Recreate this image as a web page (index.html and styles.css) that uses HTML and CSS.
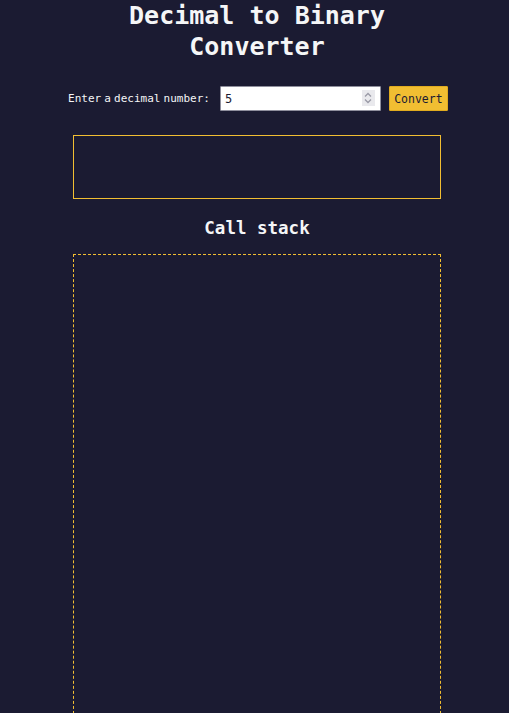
FILE: index.html
```html
<!DOCTYPE html>
<html lang="en">
<head>
<meta charset="UTF-8">
<title>Decimal to Binary Converter</title>
<link rel="stylesheet" href="styles.css">
</head>
<body>
  <main class="page">
    <h1 class="title">Decimal to Binary<br>Converter</h1>
    <div class="input-row">
      <label class="label" for="number-input">Enter a decimal number:</label>
      <span class="field">
        <input class="number-input" id="number-input" type="number" value="5">
        <span class="spinner" aria-hidden="true">
          <svg width="10" height="14" viewBox="0 0 10 14">
            <path d="M2 5.5 L5 2.5 L8 5.5" fill="none" stroke="#9a9aa6" stroke-width="1.3"/>
            <path d="M2 8.5 L5 11.5 L8 8.5" fill="none" stroke="#9a9aa6" stroke-width="1.3"/>
          </svg>
        </span>
      </span>
      <button class="convert-btn" type="button">Convert</button>
    </div>
    <div class="result"></div>
    <h2 class="stack-title">Call stack</h2>
    <div class="stack"></div>
  </main>
</body>
</html>
```
FILE: styles.css
```css
* {
  box-sizing: border-box;
}

html, body {
  margin: 0;
  padding: 0;
}

html {
  height: 713px;
  overflow: hidden;
}

body {
  background-color: #1b1b32;
  color: #f5f6f7;
  font-family: "DejaVu Sans Mono", monospace;
  height: 713px;
  overflow: hidden;
}

.page {
  display: flex;
  flex-direction: column;
  align-items: center;
  padding-left: 5px;
}

.title {
  margin: 0;
  font-size: 25px;
  line-height: 31px;
  font-weight: bold;
  text-align: center;
}

.input-row {
  display: flex;
  align-items: center;
  margin-top: 24px;
  height: 25px;
  padding-left: 2px;
}

.label {
  font-size: 11px;
  letter-spacing: 0;
  word-spacing: -3.5px;
  margin-right: 10px;
}

.field {
  position: relative;
  display: block;
  width: 161px;
  height: 25px;
  margin-right: 8px;
}

.number-input {
  width: 100%;
  height: 100%;
  margin: 0;
  border: 1px solid #8f8f9d;
  border-radius: 1px;
  background: #ffffff;
  color: #1b1b32;
  font-family: "DejaVu Sans Mono", monospace;
  font-size: 12px;
  padding: 0 0 0 4px;
  -moz-appearance: textfield;
  appearance: textfield;
}

.number-input::-webkit-inner-spin-button,
.number-input::-webkit-outer-spin-button {
  -webkit-appearance: none;
  margin: 0;
}

.spinner {
  position: absolute;
  right: 6px;
  top: 4px;
  width: 13px;
  height: 16px;
  background: #e9e9ed;
  display: flex;
  align-items: center;
  justify-content: center;
}

.convert-btn {
  width: 59px;
  height: 25px;
  margin: 0;
  padding: 0;
  border: 1px solid #e0ab1f;
  border-radius: 1px;
  background: #f1be32;
  color: #1b1b32;
  font-family: "DejaVu Sans Mono", monospace;
  font-size: 11.5px;
}

.result {
  margin-top: 24px;
  width: 368px;
  height: 64px;
  border: 1px solid #f1be32;
}

.stack-title {
  margin: 18px 0 0;
  font-size: 17.5px;
  line-height: 22px;
  font-weight: bold;
}

.stack {
  margin-top: 15px;
  width: 368px;
  height: 470px;
  flex-shrink: 0;
  border: 1px dashed #f1be32;
}
```
